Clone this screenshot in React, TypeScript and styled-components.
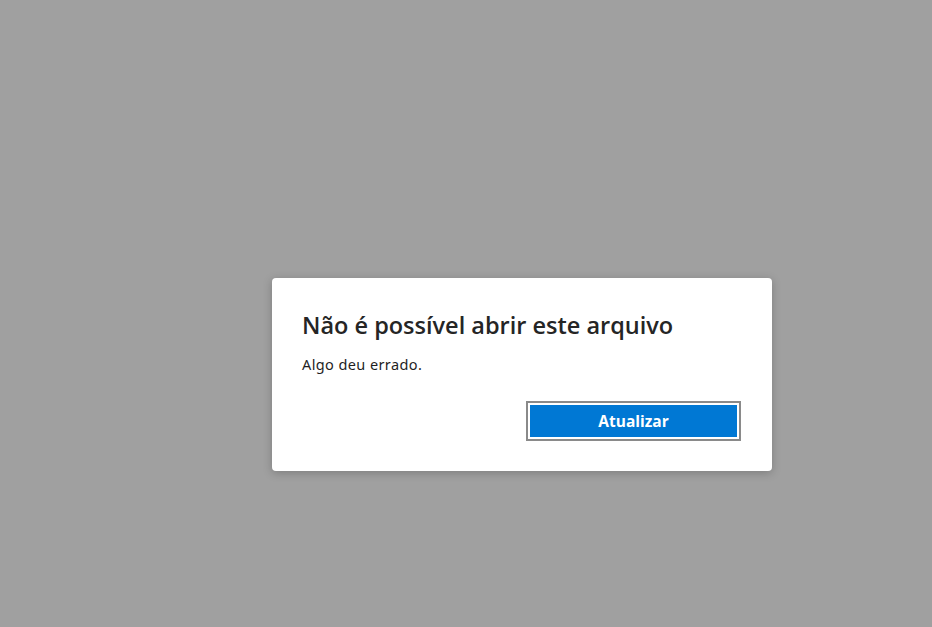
import React from "react";
import styled, { createGlobalStyle } from "styled-components";

const Global = createGlobalStyle`
  html, body { margin: 0; padding: 0; background: #a0a0a0; }
  body { font-family: "Noto Sans", "Open Sans", sans-serif; }
`;

const Page = styled.div`
  width: 932px;
  height: 627px;
  background: #a0a0a0;
  padding: 278px 0 0 272px;
  box-sizing: border-box;
  overflow: hidden;
`;

const Dialog = styled.div`
  width: 500px;
  height: 193px;
  box-sizing: border-box;
  background: #ffffff;
  border-radius: 4px;
  box-shadow: 0 2px 10px rgba(0, 0, 0, 0.22);
  padding: 29px 33px 0 30px;
  display: flex;
  flex-direction: column;
`;

const Title = styled.h1`
  margin: 0;
  font-family: "Open Sans", "Noto Sans", sans-serif;
  font-size: 23.5px;
  line-height: 36px;
  font-weight: 600;
  color: #252525;
`;

const Message = styled.p`
  margin: 11px 0 0;
  font-size: 14.5px;
  letter-spacing: 0.4px;
  line-height: 20px;
  font-weight: 400;
  color: #1f1f1f;
`;

const Actions = styled.div`
  display: flex;
  justify-content: flex-end;
  margin-top: 29px;
`;

const PrimaryButton = styled.button`
  width: 211px;
  height: 36px;
  box-sizing: border-box;
  border: 2px solid #ffffff;
  background: #0078d4;
  color: #ffffff;
  font-family: "Open Sans", "Noto Sans", sans-serif;
  font-size: 15.5px;
  font-weight: 700;
  outline: 2px solid #8a8a8a;
  outline-offset: 0;
  cursor: pointer;
  padding: 0;
`;

export default function App() {
  return (
    <>
      <Global />
      <Page>
        <Dialog role="dialog">
          <Title>Não é possível abrir este arquivo</Title>
          <Message>Algo deu errado.</Message>
          <Actions>
            <PrimaryButton>Atualizar</PrimaryButton>
          </Actions>
        </Dialog>
      </Page>
    </>
  );
}
